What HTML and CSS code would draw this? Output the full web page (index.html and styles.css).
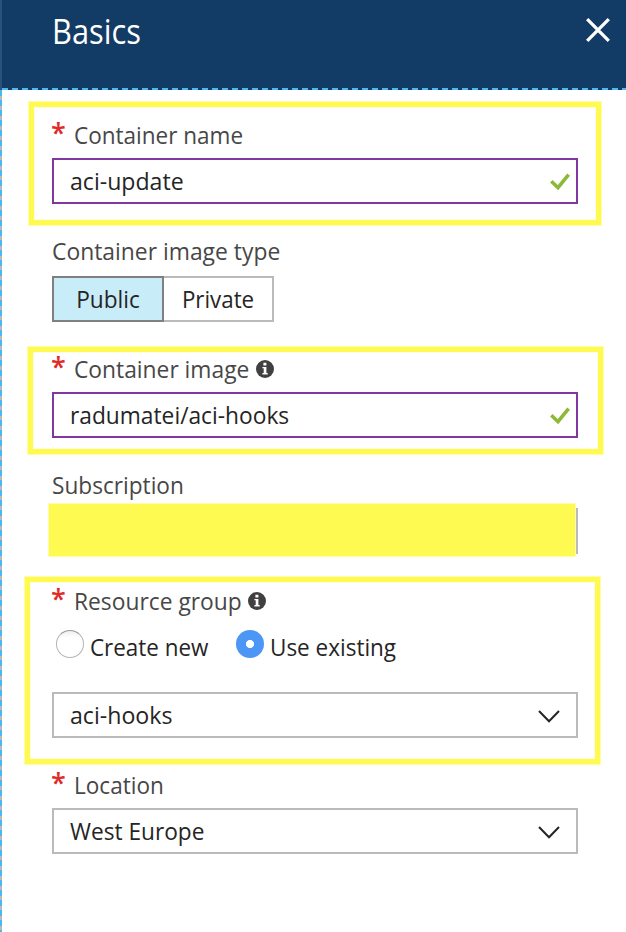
FILE: index.html
```html
<!DOCTYPE html>
<html lang="en">
<head>
<meta charset="utf-8">
<title>Basics</title>
<link rel="stylesheet" href="styles.css">
</head>
<body>
<div class="blade">
  <header class="header">
    <h1 class="title">Basics</h1>
    <svg class="close" viewBox="0 0 24 24"><path d="M1.2 1.2 22.8 22.8M22.8 1.2 1.2 22.8"/></svg>
  </header>
  <main class="form">
    <section class="mark name">
      <div class="label"><span class="star">*</span><span class="text t-name">Container name</span></div>
      <div class="field valid"><span class="text t-update">aci-update</span><svg class="check" viewBox="0 0 20 18"><path d="M1.3 8.3 8 14.7 18.6 1.6"/></svg></div>
    </section>
    <section class="type">
      <div class="label"><span class="text t-type">Container image type</span></div>
      <div class="toggle"><span class="option on"><span class="text t-public">Public</span></span><span class="option"><span class="text t-private">Private</span></span></div>
    </section>
    <section class="mark image">
      <div class="label"><span class="star">*</span><span class="text t-image">Container image</span><svg class="info" viewBox="0 0 18 18"><circle cx="9" cy="9" r="9"/><path d="M7.4 2.8h3v2.6h-3zM6.4 6.9h4v6.2h1.3v1.4H6.4v-1.4h1.3V8.3H6.4z"/></svg></div>
      <div class="field valid"><span class="text t-repo">radumatei/aci-hooks</span><svg class="check" viewBox="0 0 20 18"><path d="M1.3 8.3 8 14.7 18.6 1.6"/></svg></div>
    </section>
    <section class="subscription">
      <div class="label"><span class="text t-sub">Subscription</span></div>
      <div class="field covered"><div class="cover"></div></div>
    </section>
    <section class="mark group">
      <div class="label"><span class="star">*</span><span class="text t-group">Resource group</span><svg class="info" viewBox="0 0 18 18"><circle cx="9" cy="9" r="9"/><path d="M7.4 2.8h3v2.6h-3zM6.4 6.9h4v6.2h1.3v1.4H6.4v-1.4h1.3V8.3H6.4z"/></svg></div>
      <div class="radios">
        <span class="radio"></span><span class="radio-text first"><span class="text t-create">Create new</span></span>
        <span class="radio checked"></span><span class="radio-text"><span class="text t-use">Use existing</span></span>
      </div>
      <div class="field"><span class="text t-hooks">aci-hooks</span><svg class="chevron" viewBox="0 0 22 13"><path d="M1 1 11 11.3 21 1"/></svg></div>
    </section>
    <section class="location">
      <div class="label"><span class="star">*</span><span class="text t-loc">Location</span></div>
      <div class="field"><span class="text t-west">West Europe</span><svg class="chevron" viewBox="0 0 22 13"><path d="M1 1 11 11.3 21 1"/></svg></div>
    </section>
  </main>
</div>
</body>
</html>
```
FILE: styles.css
```css
* { box-sizing: border-box; }
body { margin: 0; background: #fff; font-family: "Open Sans", "Noto Sans", sans-serif; font-size: 23.5px; line-height: 32px; color: #252525; font-stretch: 93%; }
svg { display: block; flex: none; fill: none; }
.blade { height: 932px; overflow: hidden; }
.header {
  height: 90px; padding: 0 16px 0 50px; border-left: 2px solid #2b5179;
  display: flex; justify-content: space-between; align-items: flex-start;
  background: repeating-linear-gradient(90deg, #4db8f0 0 6px, #123b65 6px 10px) 0 88px / 100% 2px no-repeat, #123b65;
}
.title { margin: 9px 0 0; font-size: 35px; line-height: 44px; font-weight: 400; color: #fff; transform: scaleX(.88); transform-origin: 0 50%; }
.close { width: 24px; height: 24px; margin-top: 18px; stroke: #fff; stroke-width: 3.3; }
.form {
  height: 842px; padding: 12px 0 0 25px; display: flex; flex-direction: column; align-items: flex-start;
  background: repeating-linear-gradient(180deg, #4db8f0 0 6px, #b9b9b9 6px 10px) 0 0 / 2px 100% no-repeat;
}
.mark { border: 5px solid #fffa52; box-shadow: 0 0 0 1px #fffcaa, inset 0 0 0 1px #fffee0; }
.name { width: 572px; height: 123px; margin-left: 4px; padding: 12px 0 0 18px; }
.type { margin: 10px 0 0 27px; height: 87px; }
.image { width: 575px; height: 107px; margin: 25px 0 0 3px; padding: 1px 0 0 19px; }
.subscription { margin: 15px 0 0 27px; height: 85px; }
.group { width: 575px; height: 187px; margin-top: 23px; padding: 3px 0 0 22px; }
.location { margin: 5px 0 0 27px; }
.label { height: 39px; display: flex; color: #474747; white-space: nowrap; }
.type .label { height: 41px; }
.star { width: 22px; color: #e02b2b; font-size: 27px; line-height: 28px; font-weight: 600; text-indent: -1px; }
.info { width: 18px; height: 18px; margin: 7px 0 0 1px; }
.info circle { fill: #404040; }
.info path { fill: #fff; }
.text { display: inline-block; transform-origin: 0 50%; }
.t-name { transform: scaleX(.958); }
.t-update { transform: scaleX(.983); }
.t-type { transform: scaleX(.973); }
.t-public { transform: scaleX(.965); transform-origin: 50% 50%; }
.t-private { transform: scaleX(.95); transform-origin: 50% 50%; }
.t-image { transform: scaleX(.97); }
.t-repo { transform: scaleX(.968); }
.t-sub { transform: scaleX(.963); }
.t-group { transform: scaleX(.97); }
.t-create { transform: scaleX(.953); }
.t-use { transform: scaleX(.957); }
.t-hooks { transform: scaleX(.985); }
.t-loc { transform: scaleX(.96); }
.t-west { transform: scaleX(.965); }
.field { width: 526px; height: 46px; border: 2px solid #bababa; padding: 0 16px; display: flex; align-items: center; justify-content: space-between; background: #fff; white-space: nowrap; }
.valid { border-color: #8038a0; padding-right: 6px; }
.check { width: 20px; height: 18px; margin-top: 2px; stroke: #8cba36; stroke-width: 3.6; }
.chevron { width: 22px; height: 13px; margin-top: 3px; stroke: #252525; stroke-width: 2; }
.toggle { display: flex; width: 222px; height: 46px; border: 2px solid #bababa; }
.option { width: 108px; display: flex; align-items: center; justify-content: center; }
.on { width: 112px; margin: -2px 0 -2px -2px; border: 2px solid #808080; background: #c8ecf8; }
.covered { position: relative; }
.cover { position: absolute; left: -5px; top: -6px; width: 526px; height: 52px; background: #fffa52; box-shadow: 0 0 0 1px #fffcaa; }
.radios { height: 68px; display: flex; align-items: flex-start; padding-left: 4px; }
.radio { flex: none; width: 28px; height: 28px; margin-top: 6px; border-radius: 50%; border: 1px solid #b4b4b4; border-top-color: #999; background: linear-gradient(#efefef, #fff 25%); }
.checked { border: 0; background: radial-gradient(circle, #fff 0 3.7px, #4c96f5 4.4px); }
.radio-text { margin: 7px 0 0 6px; white-space: nowrap; }
.first { width: 146px; }
```
